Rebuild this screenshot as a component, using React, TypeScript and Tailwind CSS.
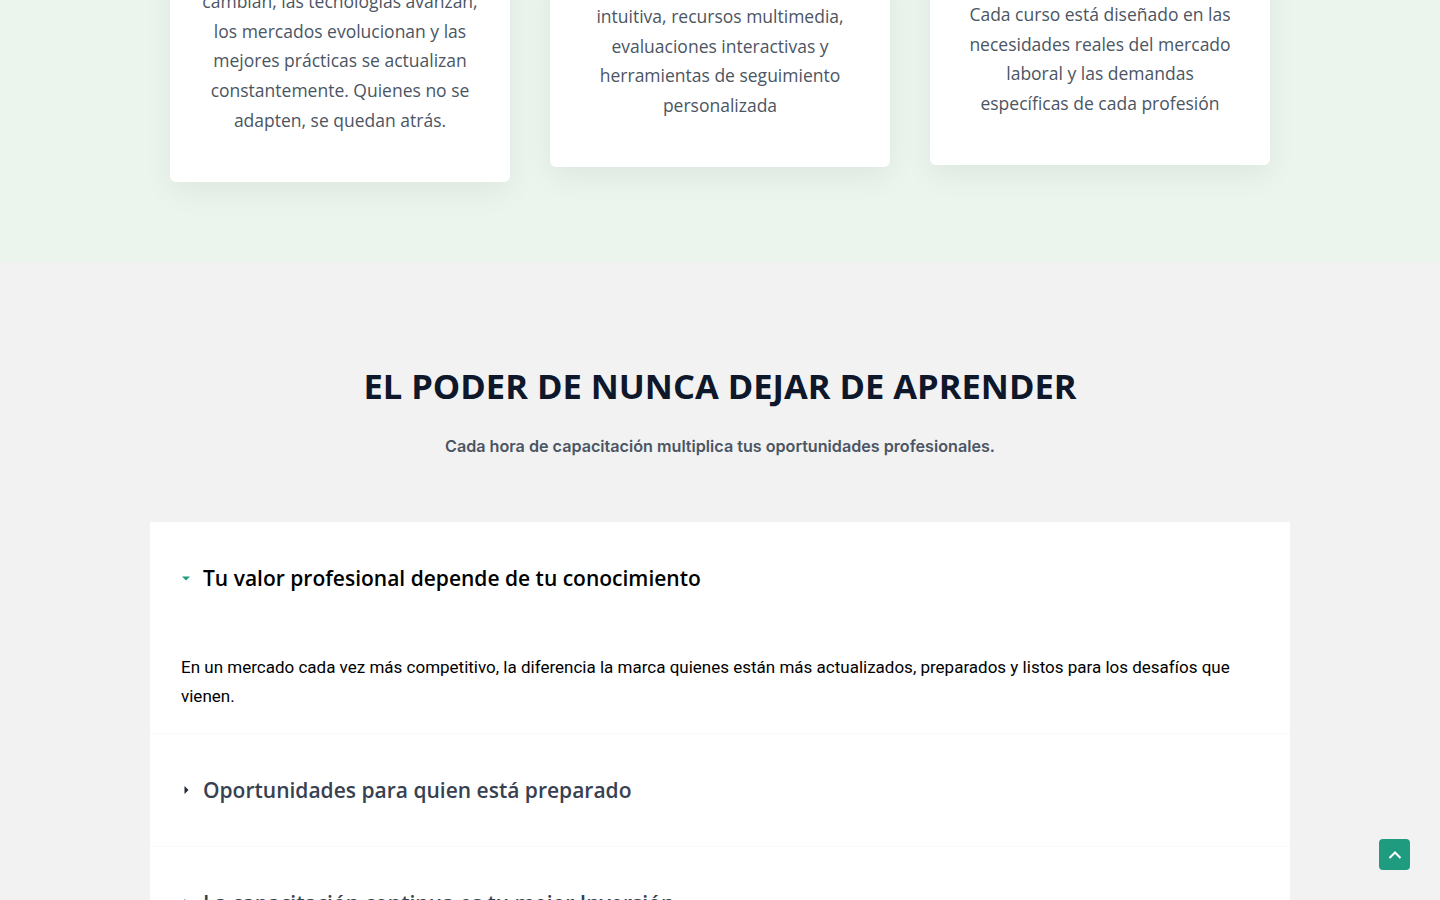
const poppins = "font-['Open_Sans','Noto_Sans',sans-serif]";

const cards = [
  {
    offset: "-mt-[53px]",
    lines: [
      "cambian, las tecnologías avanzan,",
      "los mercados evolucionan y las",
      "mejores prácticas se actualizan",
      "constantemente. Quienes no se",
      "adapten, se quedan atrás.",
    ],
  },
  {
    offset: "-mt-[38px]",
    lines: [
      "intuitiva, recursos multimedia,",
      "evaluaciones interactivas y",
      "herramientas de seguimiento",
      "personalizada",
    ],
  },
  {
    offset: "-mt-[40px]",
    lines: [
      "Cada curso está diseñado en las",
      "necesidades reales del mercado",
      "laboral y las demandas",
      "específicas de cada profesión",
    ],
  },
];

const items = [
  {
    title: "Tu valor profesional depende de tu conocimiento",
    open: true,
    body: "En un mercado cada vez más competitivo, la diferencia la marca quienes están más actualizados, preparados y listos para los desafíos que vienen.",
  },
  { title: "Oportunidades para quien está preparado", open: false, body: "" },
  { title: "La capacitación continua es tu mejor Inversión", open: false, body: "" },
  { title: "Aprende a tu ritmo, desde cualquier lugar", open: false, body: "" },
];

function CaretDown() {
  return (
    <svg width="10" height="10" viewBox="0 0 10 10" className="shrink-0">
      <path d="M1 3.5h8L5 7.5z" fill="#1f9c80" />
    </svg>
  );
}

function CaretRight() {
  return (
    <svg width="10" height="10" viewBox="0 0 10 10" className="shrink-0">
      <path d="M3.5 1v8L7.5 5z" fill="#1f2937" />
    </svg>
  );
}

export default function App() {
  return (
    <div className="min-h-screen bg-[#f2f2f2]">
      <section className="bg-[#ebf5ed] pb-[80px]">
        <div className="flex items-start justify-center gap-10">
          {cards.map((card, i) => (
            <div
              key={i}
              className={`${card.offset} w-[340px] rounded-md bg-white px-4 pt-10 pb-[46px] shadow-[0_10px_30px_rgba(0,0,0,0.06)]`}
            >
              <p className={`${poppins} text-center text-[17.5px] leading-[29.7px] text-[#4b5563]`}>
                {card.lines.map((line, j) => (
                  <span key={j} className="block whitespace-nowrap">
                    {line}
                  </span>
                ))}
              </p>
            </div>
          ))}
        </div>
      </section>

      <section className="pt-[103px] pb-24">
        <h2 className={`${poppins} text-center text-[34.5px] font-bold leading-[41px] text-[#0f172a]`}>
          EL PODER DE NUNCA DEJAR DE APRENDER
        </h2>
        <p className="mt-[28px] text-center font-['Inter',sans-serif] text-[16.15px] font-semibold leading-6 text-[#4b5563]">
          Cada hora de capacitación multiplica tus oportunidades profesionales.
        </p>

        <div className="mx-auto mt-[64px] w-[1140px] bg-white">
          {items.map((item, i) => (
            <div key={i} className="border-b border-[#fafafa] px-[31px]">
              <div className="flex items-center gap-[12px] py-[41px]">
                {item.open ? <CaretDown /> : <CaretRight />}
                <h3
                  className={`${poppins} text-[21px] font-semibold leading-[30px] ${
                    item.open ? "text-black" : "text-[#374151]"
                  }`}
                >
                  {item.title}
                </h3>
              </div>
              {item.open && (
                <p className="mt-[19px] pb-[22px] font-['Roboto',sans-serif] text-[17px] leading-[29px] text-black">
                  {item.body}
                </p>
              )}
            </div>
          ))}
        </div>
      </section>

      <button className="fixed right-[30px] bottom-[30px] flex h-[31px] w-[31px] items-center justify-center rounded-sm bg-[#1f9c80]">
        <svg width="16" height="16" viewBox="0 0 16 16" fill="none">
          <path d="M2.5 11L8 5.5l5.5 5.5" stroke="white" strokeWidth="2" />
        </svg>
      </button>
    </div>
  );
}
